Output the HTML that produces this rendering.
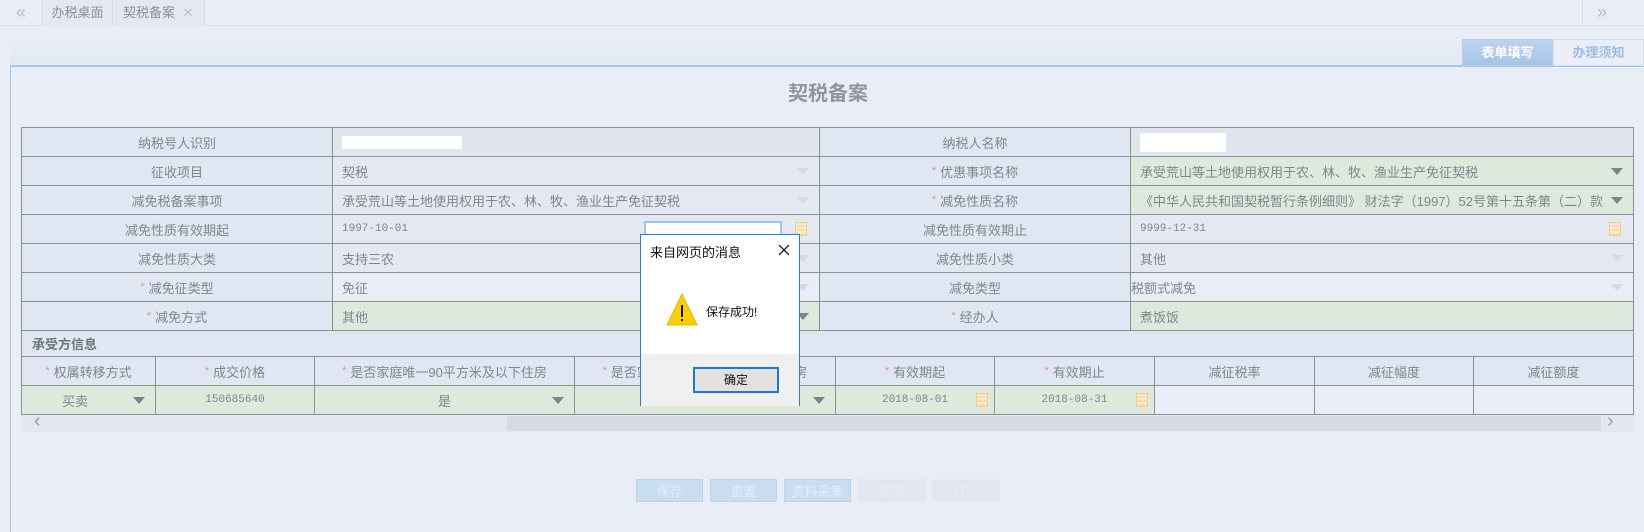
<!DOCTYPE html>
<html><head><meta charset="utf-8"><style>
*{margin:0;padding:0;box-sizing:border-box}
body{width:1644px;height:532px;overflow:hidden;background:#e8edf6;font-family:"Liberation Sans","Noto Sans CJK SC",sans-serif;font-size:13px;color:#80858e;position:relative}
.a{position:absolute}
.c{position:absolute;display:flex;align-items:center;border:1px solid #8b9099;white-space:nowrap;overflow:hidden}
.l{background:#e0e7f2;justify-content:center}
.v{background:#e3e8f1;padding-left:9px}
.g{background:#dde9dd}
.w{background:#e8edf6}
.s{color:#e88;margin-right:4px;font-size:11px}
.m{font-family:"Liberation Mono",monospace;font-size:11px}
.arr{position:absolute;right:10px;top:50%;margin-top:-3px;border-left:6px solid transparent;border-right:6px solid transparent;border-top:7px solid #7d828b}
.arr.f{border-top-color:#d5dae3}
.cal{position:absolute;width:12px;height:14px;border:1px solid #f0cc90;background:repeating-linear-gradient(0deg,#f6dcae 0 2px,#fbeacc 2px 4px)}
.btn{position:absolute;top:479px;height:23px;display:flex;align-items:center;justify-content:center;color:#e3edf8;font-size:13px}
</style></head><body>
<div class="a" style="left:0;top:0;width:1644px;height:26px;background:#e8edf6;border-bottom:1px solid #dde2ec"></div>
<div class="a" style="left:0;top:0;width:43px;height:26px;border-right:1px solid #d6dbe4;color:#b4bccb;font-size:18px;text-align:center;line-height:24px">«</div>
<div class="a" style="left:43px;top:0;width:70px;height:26px;background:#e4e9f1;border-right:1px solid #d6dbe4;text-align:center;line-height:26px;color:#8a8f98">办税桌面</div>
<div class="a" style="left:113px;top:0;width:92px;height:26px;background:#e4e9f1;border-right:1px solid #d6dbe4;line-height:26px;padding-left:10px;color:#8a8f98">契税备案 <span style="color:#b8bfcb;margin-left:4px">✕</span></div>
<div class="a" style="left:1582px;top:0;width:1px;height:26px;background:#d6dbe4"></div>
<div class="a" style="left:1597px;top:0;color:#b4bccb;font-size:18px;line-height:24px">»</div>
<div class="a" style="left:10px;top:39px;width:1634px;height:27px;background:linear-gradient(#e9eef7,#e2e8f2)"></div>
<div class="a" style="left:10px;top:65px;width:1634px;height:2px;background:#a9c6e8"></div>
<div class="a" style="left:10px;top:66px;width:1px;height:466px;background:#a9c6e8"></div>
<div class="a" style="left:1462px;top:39px;width:91px;height:27px;background:linear-gradient(#bcd4ef,#a5c4e8);border:1px solid #b9d0ea;color:#fff;font-weight:bold;text-align:center;line-height:26px">表单填写</div>
<div class="a" style="left:1553px;top:39px;width:91px;height:27px;background:#e9eef7;border:1px solid #d3deed;color:#9fbde2;font-weight:bold;text-align:center;line-height:26px">办理须知</div>
<div class="a" style="left:0;top:77px;width:1644px;text-align:center;font-size:20px;font-weight:bold;color:#92959b;padding-left:12px">契税备案</div>

<div class="c l" style="left:21px;top:127px;width:312px;height:30px">纳税号人识别</div>
<div class="c v" style="left:332px;top:127px;width:488px;height:30px;background:#e0e5ee"><div style="width:120px;height:13px;background:#fff"></div></div>
<div class="c l" style="left:819px;top:127px;width:312px;height:30px">纳税人名称</div>
<div class="c v" style="left:1130px;top:127px;width:504px;height:30px;background:#e0e5ee"><div style="width:86px;height:19px;background:#fff"></div></div>

<div class="c l" style="left:21px;top:156px;width:312px;height:30px">征收项目</div>
<div class="c v" style="left:332px;top:156px;width:488px;height:30px">契税<span class="arr f"></span></div>
<div class="c l" style="left:819px;top:156px;width:312px;height:30px"><span class="s">*</span>优惠事项名称</div>
<div class="c v g" style="left:1130px;top:156px;width:504px;height:30px">承受荒山等土地使用权用于农、林、牧、渔业生产免征契税<span class="arr"></span></div>

<div class="c l" style="left:21px;top:185px;width:312px;height:30px">减免税备案事项</div>
<div class="c v" style="left:332px;top:185px;width:488px;height:30px">承受荒山等土地使用权用于农、林、牧、渔业生产免征契税<span class="arr f"></span></div>
<div class="c l" style="left:819px;top:185px;width:312px;height:30px"><span class="s">*</span>减免性质名称</div>
<div class="c v g" style="left:1130px;top:185px;width:504px;height:30px">《中华人民共和国契税暂行条例细则》 财法字（1997）52号第十五条第（二）款<span class="arr"></span></div>

<div class="c l" style="left:21px;top:214px;width:312px;height:30px">减免性质有效期起</div>
<div class="c v m" style="left:332px;top:214px;width:488px;height:30px">1997-10-01<span class="cal" style="right:12px;top:7px"></span></div>
<div class="c l" style="left:819px;top:214px;width:312px;height:30px">减免性质有效期止</div>
<div class="c v m" style="left:1130px;top:214px;width:504px;height:30px">9999-12-31<span class="cal" style="right:12px;top:7px"></span></div>

<div class="c l" style="left:21px;top:243px;width:312px;height:30px">减免性质大类</div>
<div class="c v" style="left:332px;top:243px;width:488px;height:30px">支持三农<span class="arr f"></span></div>
<div class="c l" style="left:819px;top:243px;width:312px;height:30px">减免性质小类</div>
<div class="c v" style="left:1130px;top:243px;width:504px;height:30px">其他<span class="arr f"></span></div>

<div class="c l" style="left:21px;top:272px;width:312px;height:30px"><span class="s">*</span>减免征类型</div>
<div class="c v w" style="left:332px;top:272px;width:488px;height:30px">免征<span class="arr f"></span></div>
<div class="c l" style="left:819px;top:272px;width:312px;height:30px">减免类型</div>
<div class="c v w" style="left:1130px;top:272px;width:504px;height:30px;padding-left:0">税额式减免<span class="arr f"></span></div>

<div class="c l" style="left:21px;top:301px;width:312px;height:30px"><span class="s">*</span>减免方式</div>
<div class="c v g" style="left:332px;top:301px;width:488px;height:30px">其他<span class="arr"></span></div>
<div class="c l" style="left:819px;top:301px;width:312px;height:30px"><span class="s">*</span>经办人</div>
<div class="c v g" style="left:1130px;top:301px;width:504px;height:30px">煮饭饭</div>

<div class="c l" style="left:21px;top:330px;width:1613px;height:27px;justify-content:flex-start;padding-left:10px;font-weight:bold;color:#6f747d">承受方信息</div>

<div class="c l" style="left:21px;top:356px;width:135px;height:30px"><span class="s">*</span>权属转移方式</div>
<div class="c l" style="left:155px;top:356px;width:160px;height:30px"><span class="s">*</span>成交价格</div>
<div class="c l" style="left:314px;top:356px;width:261px;height:30px"><span class="s">*</span>是否家庭唯一90平方米及以下住房</div>
<div class="c l" style="left:574px;top:356px;width:262px;height:30px"><span class="s">*</span>是否家庭唯一90平方米及以下住房</div>
<div class="c l" style="left:835px;top:356px;width:160px;height:30px"><span class="s">*</span>有效期起</div>
<div class="c l" style="left:994px;top:356px;width:161px;height:30px"><span class="s">*</span>有效期止</div>
<div class="c l" style="left:1154px;top:356px;width:161px;height:30px">减征税率</div>
<div class="c l" style="left:1314px;top:356px;width:160px;height:30px">减征幅度</div>
<div class="c l" style="left:1473px;top:356px;width:161px;height:30px">减征额度</div>

<div class="c g" style="left:21px;top:385px;width:135px;height:30px;padding-left:40px">买卖<span class="arr"></span></div>
<div class="c g m" style="left:155px;top:385px;width:160px;height:30px;justify-content:center">150685640</div>
<div class="c g" style="left:314px;top:385px;width:261px;height:30px;justify-content:center">是<span class="arr"></span></div>
<div class="c g" style="left:574px;top:385px;width:262px;height:30px"><span class="arr"></span></div>
<div class="c g m" style="left:835px;top:385px;width:160px;height:30px;justify-content:center">2018-08-01<span class="cal" style="right:6px;top:7px"></span></div>
<div class="c g m" style="left:994px;top:385px;width:161px;height:30px;justify-content:center">2018-08-31<span class="cal" style="right:6px;top:7px"></span></div>
<div class="c w" style="left:1154px;top:385px;width:161px;height:30px"></div>
<div class="c w" style="left:1314px;top:385px;width:160px;height:30px"></div>
<div class="c w" style="left:1473px;top:385px;width:161px;height:30px"></div>

<div class="a" style="left:21px;top:415px;width:1613px;height:17px;background:#e2e7f0"></div>
<div class="a" style="left:507px;top:416px;width:1094px;height:15px;background:#d5dae3"></div>
<div class="a" style="left:34px;top:411px;color:#9aa0aa;font-size:20px;line-height:20px">‹</div>
<div class="a" style="left:1607px;top:411px;color:#9aa0aa;font-size:20px;line-height:20px">›</div>

<div class="btn" style="left:636px;width:67px;background:#c8dcf2;border:1px solid #bcd2ee">保存</div>
<div class="btn" style="left:710px;width:67px;background:#c8dcf2;border:1px solid #bcd2ee">重置</div>
<div class="btn" style="left:784px;width:67px;background:#c8dcf2;border:1px solid #bcd2ee">资料采集</div>
<div class="btn" style="left:858px;width:68px;background:#e1e6ef">提交</div>
<div class="btn" style="left:932px;width:68px;background:#e1e6ef">打印</div>

<div class="a" style="left:644px;top:221px;width:138px;height:16px;border:2px solid #9cc6ee;border-bottom:none;background:#fff"></div>

<div class="a" style="left:640px;top:234px;width:160px;height:172px;background:#fff;border:1px solid #2a7fd4">
  <div class="a" style="left:9px;top:7px;color:#111;font-size:13px">来自网页的消息</div>
  <svg class="a" style="left:137px;top:9px" width="12" height="12" viewBox="0 0 12 12"><path d="M1 1L11 11M11 1L1 11" stroke="#222" stroke-width="1.3"/></svg>
  <svg class="a" style="left:25px;top:58px" width="32" height="33" viewBox="0 0 32 33"><path d="M16 1L31 32H1Z" fill="#f8d000" stroke="#e8b400"/><rect x="15" y="12" width="2" height="12" fill="#111"/><rect x="15" y="26" width="2" height="2" fill="#111"/></svg>
  <div class="a" style="left:65px;top:68px;color:#111;font-size:12px">保存成功!</div>
  <div class="a" style="left:0;top:119px;width:158px;height:52px;background:#f0f0f0"></div>
  <div class="a" style="left:52px;top:132px;width:86px;height:26px;border:2px solid #1f78d6;background:#e1e1e1;color:#111;font-size:12px;text-align:center;line-height:22px">确定</div>
</div>
</body></html>
